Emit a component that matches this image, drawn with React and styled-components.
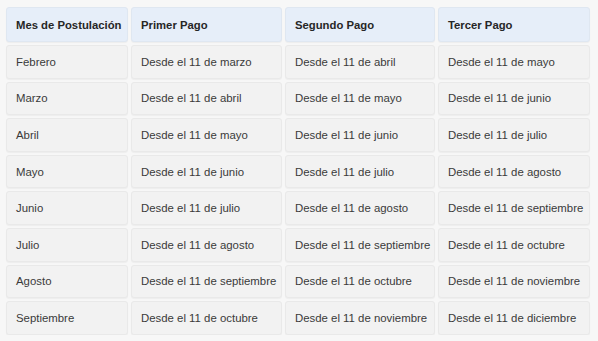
import React from "react";
import styled, { createGlobalStyle } from "styled-components";

const Global = createGlobalStyle`
  html, body { margin: 0; padding: 0; background: #f7f7f7; }
  body { font-family: "Liberation Sans", Arial, sans-serif; }
`;

const Grid = styled.div`
  display: grid;
  grid-template-columns: 122px 151px 150px 152px;
  grid-template-rows: 35px repeat(8, 33.6px);
  gap: 3px;
  padding: 7px 0 0 6px;
  width: max-content;
`;

const Cell = styled.div`
  display: flex;
  align-items: center;
  padding: 0 9px;
  box-sizing: border-box;
  border-radius: 3px;
  border: 1px solid ${(p) => (p.$head ? "#dfe7f1" : "#e9e9e9")};
  background: ${(p) => (p.$head ? "#e6eef9" : "#f2f2f2")};
  box-shadow: 0 1px 1px rgba(0, 0, 0, 0.04);
  font-size: ${(p) => (p.$head ? "11.3px" : "11.4px")};
  font-weight: ${(p) => (p.$head ? 700 : 400)};
  color: ${(p) => (p.$head ? "#262626" : "#3a3a3a")};
  white-space: nowrap;
`;

const head = ["Mes de Postulación", "Primer Pago", "Segundo Pago", "Tercer Pago"];
const rows = [
  ["Febrero", "marzo", "abril", "mayo"],
  ["Marzo", "abril", "mayo", "junio"],
  ["Abril", "mayo", "junio", "julio"],
  ["Mayo", "junio", "julio", "agosto"],
  ["Junio", "julio", "agosto", "septiembre"],
  ["Julio", "agosto", "septiembre", "octubre"],
  ["Agosto", "septiembre", "octubre", "noviembre"],
  ["Septiembre", "octubre", "noviembre", "diciembre"],
];

export default function App() {
  return (
    <>
      <Global />
      <Grid role="table">
        {head.map((h) => (
          <Cell key={h} $head role="columnheader">{h}</Cell>
        ))}
        {rows.map((r) =>
          r.map((c, i) => (
            <Cell key={r[0] + i} role="cell">
              {i === 0 ? c : `Desde el 11 de ${c}`}
            </Cell>
          ))
        )}
      </Grid>
    </>
  );
}
